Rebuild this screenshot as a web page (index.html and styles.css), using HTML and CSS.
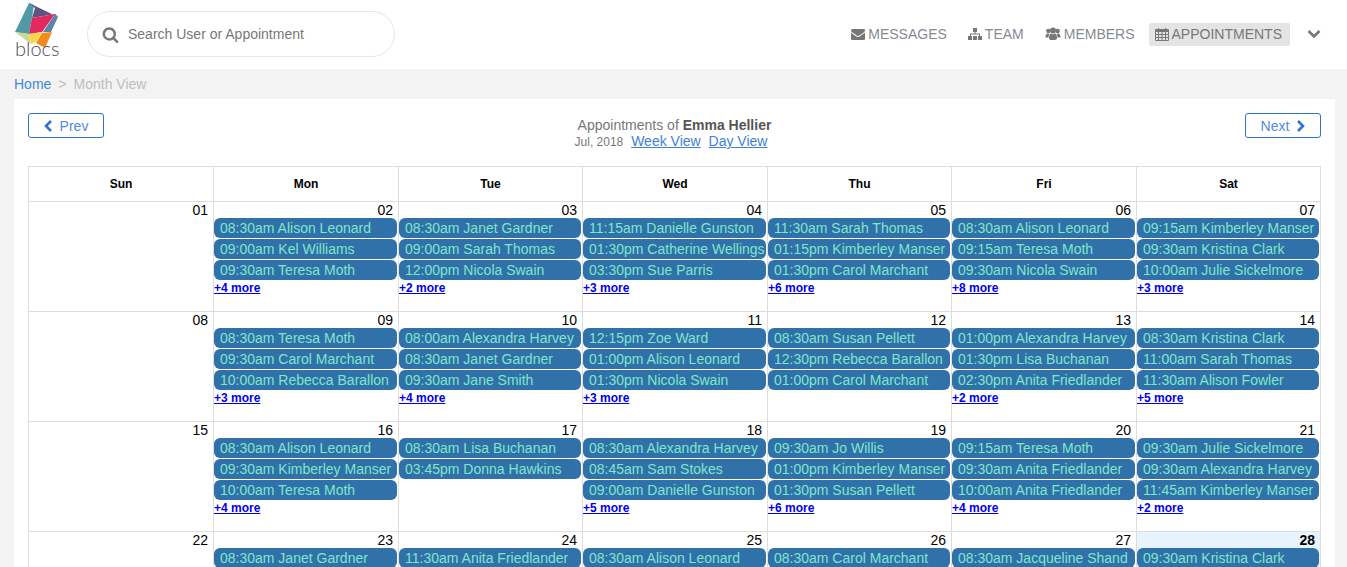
FILE: index.html
```html
<!DOCTYPE html>
<html>
  <head>
    <meta charset="utf-8">
    <title>Blocs - Month View</title>
    <link rel="stylesheet" href="styles.css">
  </head>
  <body>
    <div class="header">
      <div class="logo">
        <svg class="logo-mark" width="46" height="48" viewBox="14 2 46 48">
          <polygon points="29,3 34,5 32,18 29,34 15,32" fill="#4f9aa6"/>
          <polygon points="29,3 58,17 55,14 32,18 35,8" fill="#5d5480"/>
          <polygon points="32,18 55,14 42,32 29,34" fill="#e3285f"/>
          <polygon points="55,14 58,17 51,32 43,32" fill="#5c85ab"/>
          <polygon points="15,32 29,34 31,44" fill="#c9d98f"/>
          <polygon points="29,34 42,32 36,42 31,44" fill="#f7d44c"/>
          <polygon points="42,33 52,32 45,48 36,43" fill="#f58a1f"/>
        </svg>
        <span class="logo-text">blocs</span>
      </div>
      <div class="search">
        <svg class="search-icon" width="17" height="17" viewBox="0 0 1792 1792"><path fill="#777" d="M1216 832q0-185-131.500-316.500t-316.500-131.500-316.500 131.500-131.500 316.500 131.500 316.500 316.500 131.500 316.500-131.500 131.500-316.500zm512 832q0 52-38 90t-90 38q-54 0-90-38l-343-342q-179 124-399 124-143 0-273.500-55.500t-225-150-150-225-55.500-273.500 55.500-273.500 150-225 225-150 273.500-55.500 273.500 55.500 225 150 150 225 55.500 273.500q0 220-124 399l343 343q37 37 37 90z"/></svg>
        <span>Search User or Appointment</span>
      </div>
      <div class="nav">
        <a class="nav-item">
          <svg width="14" height="14" viewBox="0 0 1792 1792"><path fill="#777" d="M1792 710v794q0 66-47 113t-113 47h-1472q-66 0-113-47t-47-113v-794q44 49 101 87 362 246 497 345 57 42 92.500 65.500t94.500 48 110 24.500h2q51 0 110-24.500t94.500-48 92.500-65.500q170-123 498-345 57-39 100-87zm0-294q0 79-49 151t-122 123q-376 261-468 325-10 7-42.500 30.500t-54 38-52 32.500-57.500 27-50 9h-2q-23 0-50-9t-57.500-27-52-32.500-54-38-42.500-30.500q-91-64-262-182.500t-205-142.500q-62-42-117-115.500t-55-136.500q0-78 41.500-130t118.500-52h1472q65 0 112.500 47t47.500 113z"/></svg>
          MESSAGES
        </a>
        <a class="nav-item">
          <svg width="14" height="14" viewBox="0 0 14 14"><g fill="#777"><rect x="5" y="1" width="4" height="4"/><rect x="6.500" y="5" width="1" height="2"/><rect x="2" y="6.500" width="10" height="1"/><rect x="2" y="7" width="1" height="2"/><rect x="11" y="7" width="1" height="2"/><rect x="0" y="9" width="4" height="4"/><rect x="5" y="9" width="4" height="4"/><rect x="10" y="9" width="4" height="4"/></g></svg>
          TEAM
        </a>
        <a class="nav-item">
          <svg width="16" height="14" viewBox="0 0 15 14"><g fill="#777"><circle cx="2.800" cy="4" r="2.200"/><circle cx="12.200" cy="4" r="2.200"/><circle cx="7.500" cy="3.600" r="3"/><path d="M0 10.500c0-3 1-4 2.500-4 .5 0 1 .3 1.500.5-.7 1-1 2-1 3.500H0z"/><path d="M15 10.500c0-3-1-4-2.500-4-.5 0-1 .3-1.500.5.700 1 1 2 1 3.500h3z"/><path d="M3.500 11c0-3 1-4.500 2-4.500.5.400 1.200.7 2 .7s1.500-.3 2-.7c1 0 2 1.500 2 4.500 0 1.300-.8 2-2 2h-4c-1.200 0-2-.7-2-2z"/></g></svg>
          MEMBERS
        </a>
        <a class="nav-item active">
          <svg width="14" height="14" viewBox="0 0 14 14"><path fill="#777" fill-rule="evenodd" d="M1 2h2V1h1v1h6V1h1v1h2a1 1 0 0 1 1 1v10a1 1 0 0 1-1 1H1a1 1 0 0 1-1-1V3a1 1 0 0 1 1-1zM1 5v2h2V5zm3 0v2h2.500V5zm3.500 0v2H10V5zM11 5v2h2V5zM1 8v2h2V8zm3 0v2h2.500V8zm3.500 0v2H10V8zM11 8v2h2V8zM1 11v2h2v-2zm3 0v2h2.500v-2zm3.500 0v2H10v-2zm3.500 0v2h2v-2z"/></svg>
          APPOINTMENTS
        </a>
        <svg class="nav-toggle" width="14" height="10" viewBox="0 0 14 10"><polyline points="1.500,2 7,7.500 12.500,2" fill="none" stroke="#777" stroke-width="2.600"/></svg>
      </div>
    </div>

    <div class="breadcrumb">
      <a class="crumb-link">Home</a>
      <span class="crumb-sep">&gt;</span>
      <span class="crumb-current">Month View</span>
    </div>

    <div class="card">
      <div class="toolbar">
        <a class="btn">
          <svg width="9" height="12" viewBox="0 0 9 12"><polyline points="7,1 2,6 7,11" fill="none" stroke="#2f73d0" stroke-width="2.600"/></svg>
          Prev
        </a>
        <div class="title">
          <div class="title-main">Appointments of <b>Emma Hellier</b></div>
          <div class="title-sub"><span class="title-month">Jul, 2018</span> <a>Week View</a> <a>Day View</a></div>
        </div>
        <a class="btn">
          Next
          <svg width="9" height="12" viewBox="0 0 9 12"><polyline points="2,1 7,6 2,11" fill="none" stroke="#2f73d0" stroke-width="2.600"/></svg>
        </a>
      </div>

      <table class="calendar">
        <colgroup>
          <col class="col-wide"><col class="col-wide"><col class="col-narrow"><col class="col-wide"><col class="col-narrow"><col class="col-wide"><col class="col-narrow">
        </colgroup>
        <thead>
          <tr><th>Sun</th><th>Mon</th><th>Tue</th><th>Wed</th><th>Thu</th><th>Fri</th><th>Sat</th></tr>
        </thead>
        <tbody>
          <tr>
            <td><div class="date">01</div></td>
            <td><div class="date">02</div>
              <div class="event">08:30am Alison Leonard</div>
              <div class="event">09:00am Kel Williams</div>
              <div class="event">09:30am Teresa Moth</div>
              <a class="more">+4 more</a></td>
            <td><div class="date">03</div>
              <div class="event">08:30am Janet Gardner</div>
              <div class="event">09:00am Sarah Thomas</div>
              <div class="event">12:00pm Nicola Swain</div>
              <a class="more">+2 more</a></td>
            <td><div class="date">04</div>
              <div class="event">11:15am Danielle Gunston</div>
              <div class="event">01:30pm Catherine Wellings</div>
              <div class="event">03:30pm Sue Parris</div>
              <a class="more">+3 more</a></td>
            <td><div class="date">05</div>
              <div class="event">11:30am Sarah Thomas</div>
              <div class="event">01:15pm Kimberley Manser</div>
              <div class="event">01:30pm Carol Marchant</div>
              <a class="more">+6 more</a></td>
            <td><div class="date">06</div>
              <div class="event">08:30am Alison Leonard</div>
              <div class="event">09:15am Teresa Moth</div>
              <div class="event">09:30am Nicola Swain</div>
              <a class="more">+8 more</a></td>
            <td><div class="date">07</div>
              <div class="event">09:15am Kimberley Manser</div>
              <div class="event">09:30am Kristina Clark</div>
              <div class="event">10:00am Julie Sickelmore</div>
              <a class="more">+3 more</a></td>
          </tr>
          <tr>
            <td><div class="date">08</div></td>
            <td><div class="date">09</div>
              <div class="event">08:30am Teresa Moth</div>
              <div class="event">09:30am Carol Marchant</div>
              <div class="event">10:00am Rebecca Barallon</div>
              <a class="more">+3 more</a></td>
            <td><div class="date">10</div>
              <div class="event">08:00am Alexandra Harvey</div>
              <div class="event">08:30am Janet Gardner</div>
              <div class="event">09:30am Jane Smith</div>
              <a class="more">+4 more</a></td>
            <td><div class="date">11</div>
              <div class="event">12:15pm Zoe Ward</div>
              <div class="event">01:00pm Alison Leonard</div>
              <div class="event">01:30pm Nicola Swain</div>
              <a class="more">+3 more</a></td>
            <td><div class="date">12</div>
              <div class="event">08:30am Susan Pellett</div>
              <div class="event">12:30pm Rebecca Barallon</div>
              <div class="event">01:00pm Carol Marchant</div></td>
            <td><div class="date">13</div>
              <div class="event">01:00pm Alexandra Harvey</div>
              <div class="event">01:30pm Lisa Buchanan</div>
              <div class="event">02:30pm Anita Friedlander</div>
              <a class="more">+2 more</a></td>
            <td><div class="date">14</div>
              <div class="event">08:30am Kristina Clark</div>
              <div class="event">11:00am Sarah Thomas</div>
              <div class="event">11:30am Alison Fowler</div>
              <a class="more">+5 more</a></td>
          </tr>
          <tr>
            <td><div class="date">15</div></td>
            <td><div class="date">16</div>
              <div class="event">08:30am Alison Leonard</div>
              <div class="event">09:30am Kimberley Manser</div>
              <div class="event">10:00am Teresa Moth</div>
              <a class="more">+4 more</a></td>
            <td><div class="date">17</div>
              <div class="event">08:30am Lisa Buchanan</div>
              <div class="event">03:45pm Donna Hawkins</div></td>
            <td><div class="date">18</div>
              <div class="event">08:30am Alexandra Harvey</div>
              <div class="event">08:45am Sam Stokes</div>
              <div class="event">09:00am Danielle Gunston</div>
              <a class="more">+5 more</a></td>
            <td><div class="date">19</div>
              <div class="event">09:30am Jo Willis</div>
              <div class="event">01:00pm Kimberley Manser</div>
              <div class="event">01:30pm Susan Pellett</div>
              <a class="more">+6 more</a></td>
            <td><div class="date">20</div>
              <div class="event">09:15am Teresa Moth</div>
              <div class="event">09:30am Anita Friedlander</div>
              <div class="event">10:00am Anita Friedlander</div>
              <a class="more">+4 more</a></td>
            <td><div class="date">21</div>
              <div class="event">09:30am Julie Sickelmore</div>
              <div class="event">09:30am Alexandra Harvey</div>
              <div class="event">11:45am Kimberley Manser</div>
              <a class="more">+2 more</a></td>
          </tr>
          <tr>
            <td><div class="date">22</div></td>
            <td><div class="date">23</div>
              <div class="event">08:30am Janet Gardner</div></td>
            <td><div class="date">24</div>
              <div class="event">11:30am Anita Friedlander</div></td>
            <td><div class="date">25</div>
              <div class="event">08:30am Alison Leonard</div></td>
            <td><div class="date">26</div>
              <div class="event">08:30am Carol Marchant</div></td>
            <td><div class="date">27</div>
              <div class="event">08:30am Jacqueline Shand</div></td>
            <td class="today"><div class="date">28</div>
              <div class="event">09:30am Kristina Clark</div></td>
          </tr>
        </tbody>
      </table>
    </div>
  </body>
</html>
```

FILE: styles.css
```css
html {
  overflow: hidden;
}
body {
  margin: 0;
  background: #f3f3f3;
  font-family: "Liberation Sans", Arial, sans-serif;
  font-size: 14px;
}

/* top bar */
.header {
  height: 68px;
  padding-bottom: 1px;
  background: #fff;
  display: flex;
  align-items: center;
  padding-left: 14px;
  padding-right: 26px;
}
.logo {
  width: 73px;
  height: 58px;
  flex: none;
  position: relative;
}
.logo-mark {
  display: block;
  margin-top: -3px;
}
.logo-text {
  position: absolute;
  left: 1px;
  top: 31px;
  font-family: Lato, sans-serif;
  font-weight: 300;
  font-size: 20px;
  color: #4d4d55;
}
.search {
  width: 292px;
  height: 44px;
  flex: none;
  border: 1px solid #e6e6e6;
  border-radius: 23px;
  display: flex;
  align-items: center;
  gap: 9px;
  padding-left: 14px;
  margin-right: auto;
  color: #777;
}
.nav {
  display: flex;
  align-items: center;
  gap: 21px;
}
.nav-item {
  display: flex;
  align-items: center;
  gap: 3px;
  color: #858b94;
  white-space: nowrap;
}
.nav-item.active {
  background: #e4e4e4;
  border-radius: 2px;
  height: 23px;
  padding: 0 8px 0 6px;
  margin-left: -7px;
  color: #777;
}
.nav-toggle {
  margin-left: -4px;
  display: block;
}

.breadcrumb {
  height: 30px;
  line-height: 30px;
  padding-left: 14px;
  display: flex;
  color: #c2bcbc;
}
.crumb-link {
  color: #3f8ad8;
}
.crumb-sep {
  margin: 0 7px;
}

/* month view */
.card {
  background: #fff;
  margin: 0 12px 0 14px;
  padding: 14px 14px 0;
}
.toolbar {
  display: flex;
  justify-content: space-between;
  align-items: flex-start;
  height: 53px;
}
.btn {
  width: 74px;
  height: 23px;
  border: 1px solid #2f73d0;
  border-radius: 3px;
  display: flex;
  align-items: center;
  justify-content: center;
  gap: 7px;
  color: #4f8ae0;
}
.title {
  text-align: center;
  color: #777;
  line-height: 16px;
  margin-top: 4px;
}
.title-main b {
  color: #555;
}
.title-sub {
  padding-right: 7px;
}
.title-sub a {
  color: #3f7fd8;
  text-decoration: underline;
  margin-left: 4px;
}
.title-month {
  font-size: 12px;
}

.calendar {
  table-layout: fixed;
  border-collapse: collapse;
}
.col-wide {
  width: 185px;
}
.col-narrow {
  width: 184px;
}
.calendar th,
.calendar td {
  border: 1px solid #ddd;
}
.calendar th {
  height: 32px;
  font-size: 12px;
  color: #000;
}
.calendar td {
  height: 109px;
  padding: 0;
  vertical-align: top;
}
.date {
  height: 16px;
  line-height: 16px;
  text-align: right;
  padding-right: 5px;
  color: #000;
}
.today {
  background: #e8f4fd;
}
.today .date {
  font-weight: bold;
}
.event {
  height: 20px;
  line-height: 20px;
  margin: 0 1px 1px 0;
  padding-left: 6px;
  background: #3071a9;
  border-radius: 6px;
  color: #7fe6c8;
  white-space: nowrap;
  overflow: hidden;
}
.more {
  display: block;
  font-size: 12px;
  font-weight: bold;
  line-height: 14px;
  color: #0000ee;
  text-decoration: underline;
}
```
